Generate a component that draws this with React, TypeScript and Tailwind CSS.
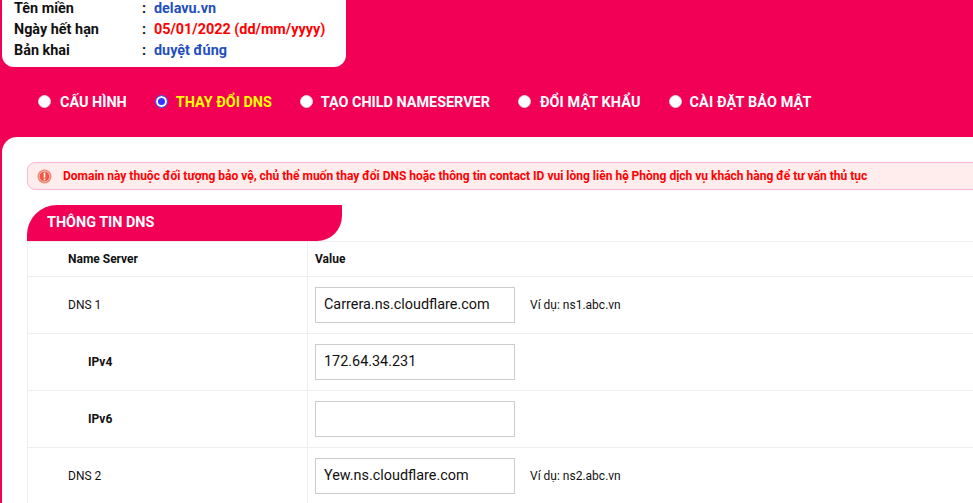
import React from "react";

const nav = [
  { label: "CẤU HÌNH", active: false, mr: "mr-[28px]", gap: "mr-[9px]", track: "" },
  { label: "THAY ĐỔI DNS", active: true, mr: "mr-[28px]", gap: "mr-[8px]", track: "" },
  { label: "TẠO CHILD NAMESERVER", active: false, mr: "mr-[28px]", gap: "mr-[8px]", track: "" },
  { label: "ĐỔI MẬT KHẨU", active: false, mr: "mr-[28px]", gap: "mr-[9px]", track: "tracking-[0.1px]" },
  { label: "CÀI ĐẶT BẢO MẬT", active: false, mr: "", gap: "mr-[8px]", track: "tracking-[0.15px]" },
];

function Row({ label, sub, value, hint }: { label: string; sub?: boolean; value: string; hint?: string }) {
  return (
    <div className="flex h-[57px] shrink-0 border-b border-[#eeeeee]">
      <div className={`flex w-[280px] shrink-0 items-center border-r border-[#eeeeee] text-[12px] text-[#111111] ${sub ? "pl-[60px] font-bold" : "pl-[40px]"}`}>
        {label}
      </div>
      <div className="flex items-center pl-[7px]">
        <input
          readOnly
          value={value}
          className="h-[36px] w-[200px] border border-[#cccccc] bg-white px-[8px] pb-[2px] text-[14.4px] text-[#111111] outline-none"
        />
        {hint && <span className="ml-[15px] text-[12px] text-[#111111]">{hint}</span>}
      </div>
    </div>
  );
}

export default function App() {
  return (
    <div className="h-[503px] w-[973px] overflow-hidden bg-[#f20056] font-['Roboto',sans-serif]">
      <div className="ml-[2px] h-[67px] w-[344px] rounded-b-[12px] bg-white pl-[12px] text-[14.4px] font-bold leading-[21px]">
        <div className="flex h-[19px] items-end text-[#111111]">
          <span className="w-[128px]">Tên miền</span>
          <span className="w-[12px]">:</span>
          <span className="text-[#1f4fbf]">delavu.vn</span>
        </div>
        <div className="flex h-[21px] items-end text-[#111111]">
          <span className="w-[128px]">Ngày hết hạn</span>
          <span className="w-[12px]">:</span>
          <span className="text-[#ff0000]">05/01/2022 (dd/mm/yyyy)</span>
        </div>
        <div className="flex h-[21px] items-end text-[#111111]">
          <span className="w-[128px]">Bản khai</span>
          <span className="w-[12px]">:</span>
          <span className="text-[#1f4fbf]">duyệt đúng</span>
        </div>
      </div>

      <div className="flex h-[70px] items-center pl-[38px]">
        {nav.map((n) => (
          <label key={n.label} className={`flex items-center ${n.mr}`}>
            <input
              type="radio"
              name="tab"
              readOnly
              checked={n.active}
              className={`${n.gap} h-[13px] w-[13px] appearance-none rounded-full border border-[#d4d4d4] bg-white checked:border-[#3a62ff] checked:bg-[#3535ff] checked:shadow-[inset_0_0_0_2px_#ffffff]`}
            />
            <span className={`pt-[2px] text-[14.4px] font-bold ${n.track} ${n.active ? "text-[#ffff00]" : "text-white"}`}>{n.label}</span>
          </label>
        ))}
      </div>

      <div className="ml-[2px] h-[366px] overflow-hidden rounded-tl-[15px] bg-white pl-[25px] pt-[25px]">
        <div className="flex h-[28px] w-[960px] items-center rounded-l-[8px] border border-[#ffb3d9] bg-[#ffecec] pl-[9px]">
          <svg width="15" height="15" viewBox="0 0 15 15" className="mr-[11px] shrink-0">
            <circle cx="7.5" cy="7.5" r="7" fill="#f08a78" />
            <circle cx="7.5" cy="7.5" r="5.2" fill="#ee5a45" stroke="#fbd0c6" strokeWidth="0.7" />
            <rect x="6.7" y="3.6" width="1.6" height="5" fill="#ffffff" />
            <rect x="6.7" y="9.6" width="1.6" height="1.7" fill="#ffffff" />
          </svg>
          <span className="whitespace-nowrap text-[12px] font-bold text-[#ff0000]">
            Domain này thuộc đối tượng bảo vệ, chủ thể muốn thay đổi DNS hoặc thông tin contact ID vui lòng liên hệ Phòng dịch vụ khách hàng để tư vấn thủ tục
          </span>
        </div>

        <div className="mt-[15px] flex h-[36px] w-[315px] items-center rounded-tl-[30px] rounded-br-[25px] bg-[#f20056] pl-[20px] text-[14.4px] font-bold text-white">
          THÔNG TIN DNS
        </div>

        <div className="flex w-[960px] flex-col border-l border-t border-[#eeeeee]">
          <div className="flex h-[35px] shrink-0 border-b border-[#eeeeee] text-[12px] font-bold text-[#111111]">
            <div className="flex w-[280px] shrink-0 items-center border-r border-[#eeeeee] pl-[40px]">Name Server</div>
            <div className="flex items-center pl-[7px]">Value</div>
          </div>
          <Row label="DNS 1" value="Carrera.ns.cloudflare.com" hint="Ví dụ: ns1.abc.vn" />
          <Row label="IPv4" sub value="172.64.34.231" />
          <Row label="IPv6" sub value="" />
          <Row label="DNS 2" value="Yew.ns.cloudflare.com" hint="Ví dụ: ns2.abc.vn" />
        </div>
      </div>
    </div>
  );
}
